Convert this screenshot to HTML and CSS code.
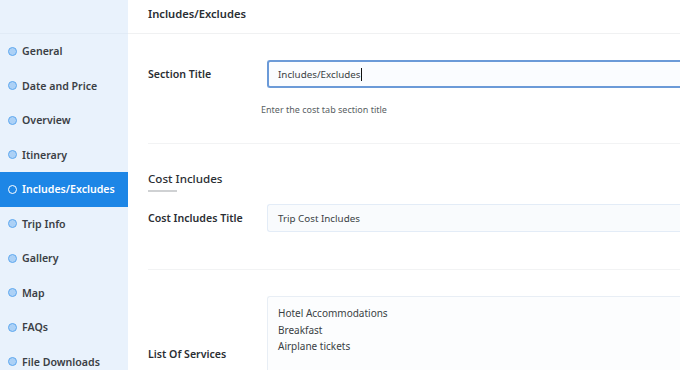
FILE: index.html
```html
<!DOCTYPE html>
<html>
<head>
<meta charset="utf-8">
<link rel="stylesheet" href="styles.css">
</head>
<body>
<div class="app">
  <aside class="sidebar">
    <div class="sidebar-top"></div>
    <ul class="nav">
      <li class="nav-item"><span class="dot"></span>General</li>
      <li class="nav-item"><span class="dot"></span>Date and Price</li>
      <li class="nav-item"><span class="dot"></span>Overview</li>
      <li class="nav-item"><span class="dot"></span>Itinerary</li>
      <li class="nav-item active"><span class="dot"></span>Includes/Excludes</li>
      <li class="nav-item"><span class="dot"></span>Trip Info</li>
      <li class="nav-item"><span class="dot"></span>Gallery</li>
      <li class="nav-item"><span class="dot"></span>Map</li>
      <li class="nav-item"><span class="dot"></span>FAQs</li>
      <li class="nav-item"><span class="dot"></span>File Downloads</li>
    </ul>
  </aside>
  <main class="content">
    <header class="page-head">Includes/Excludes</header>
    <section class="block block-first">
      <div class="row">
        <label class="label">Section Title</label>
        <div class="input focused">Includes/Excludes<span class="caret"></span></div>
      </div>
      <p class="help">Enter the cost tab section title</p>
    </section>
    <section class="block block-second">
      <h3 class="sub-title">Cost Includes</h3>
      <div class="row">
        <label class="label">Cost Includes Title</label>
        <div class="input">Trip Cost Includes</div>
      </div>
    </section>
    <section class="block block-third">
      <div class="row row-top">
        <label class="label label-low">List Of Services</label>
        <div class="textarea">
          <div>Hotel Accommodations</div>
          <div>Breakfast</div>
          <div>Airplane tickets</div>
        </div>
      </div>
    </section>
  </main>
</div>
</body>
</html>
```
FILE: styles.css
```css
* { box-sizing: border-box; }
html, body { margin: 0; padding: 0; }
body {
  font-family: "Noto Sans", "Open Sans", sans-serif;
  color: #2f3337;
  background: #fff;
  width: 680px;
  height: 370px;
  overflow: hidden;
}
.app {
  display: flex;
  height: 370px;
}
.sidebar {
  width: 128px;
  flex: none;
  background: #e9f2fc;
}
.sidebar-top {
  height: 34px;
  border-bottom: 1px solid #e1ebf6;
}
.nav {
  list-style: none;
  margin: 0;
  padding: 0;
}
.nav-item {
  height: 34.5px;
  display: flex;
  align-items: center;
  padding-left: 8px;
  font-size: 10.6px;
  font-weight: 600;
  color: #3b4045;
}
.dot {
  width: 9px;
  height: 9px;
  border-radius: 50%;
  background: #acd1f6;
  border: 1.5px solid #5ea8ef;
  margin-right: 5px;
  flex: none;
}
.nav-item.active {
  background: #1d86e6;
  color: #fff;
}
.nav-item.active .dot {
  background: transparent;
  border: 1.5px solid #fff;
}
.content {
  flex: 1;
  min-width: 0;
}
.page-head {
  height: 34px;
  border-bottom: 1px solid #f0f1f2;
  padding-left: 20px;
  display: flex;
  align-items: center;
  font-size: 11.2px;
  font-weight: 600;
  color: #2a2e33;
  padding-bottom: 6px;
}
.block {
  margin-left: 20px;
  border-bottom: 1px solid #f2f3f4;
}
.block-first {
  padding-top: 26px;
  height: 110px;
}
.block-second {
  height: 126px;
  padding-top: 22px;
}
.block-third {
  border-bottom: none;
  padding-top: 26px;
}
.row {
  display: flex;
  align-items: center;
}
.row-top {
  align-items: flex-start;
}
.label {
  width: 119px;
  flex: none;
  font-size: 10.6px;
  font-weight: 600;
  color: #2a2e33;
}
.label-low {
  padding-top: 51px;
}
.input {
  flex: 1;
  height: 28px;
  border: 1px solid #e3ecf7;
  border-right: none;
  border-radius: 3px 0 0 3px;
  background: #f9fbfd;
  font-size: 9.8px;
  padding-left: 10px;
  display: flex;
  align-items: center;
  color: #3a3f44;
}
.input.focused {
  border: 2px solid #6b9ad8;
  border-right: none;
  padding-left: 9px;
  background: #fafcff;
}
.caret {
  display: inline-block;
  width: 1px;
  height: 13px;
  background: #111;
}
.help {
  margin: 15px 0 0 113px;
  font-size: 9px;
  color: #5a5f64;
}
.sub-title {
  margin: 0;
  font-size: 11.6px;
  font-weight: 500;
  color: #2a2e33;
  display: inline-block;
  position: relative;
  line-height: 18px;
}
.sub-title::after {
  content: "";
  display: block;
  width: 29px;
  height: 2px;
  background: #cfd1d3;
  margin-top: 2px;
}
.block-second .row {
  margin-top: 12px;
}
.textarea {
  flex: 1;
  height: 80px;
  border: 1px solid #e8eef5;
  border-right: none;
  border-radius: 3px 0 0 3px;
  background: #fcfdfe;
  padding: 8px 10px;
  font-size: 10px;
  line-height: 16.7px;
  color: #3a3f44;
}
```
